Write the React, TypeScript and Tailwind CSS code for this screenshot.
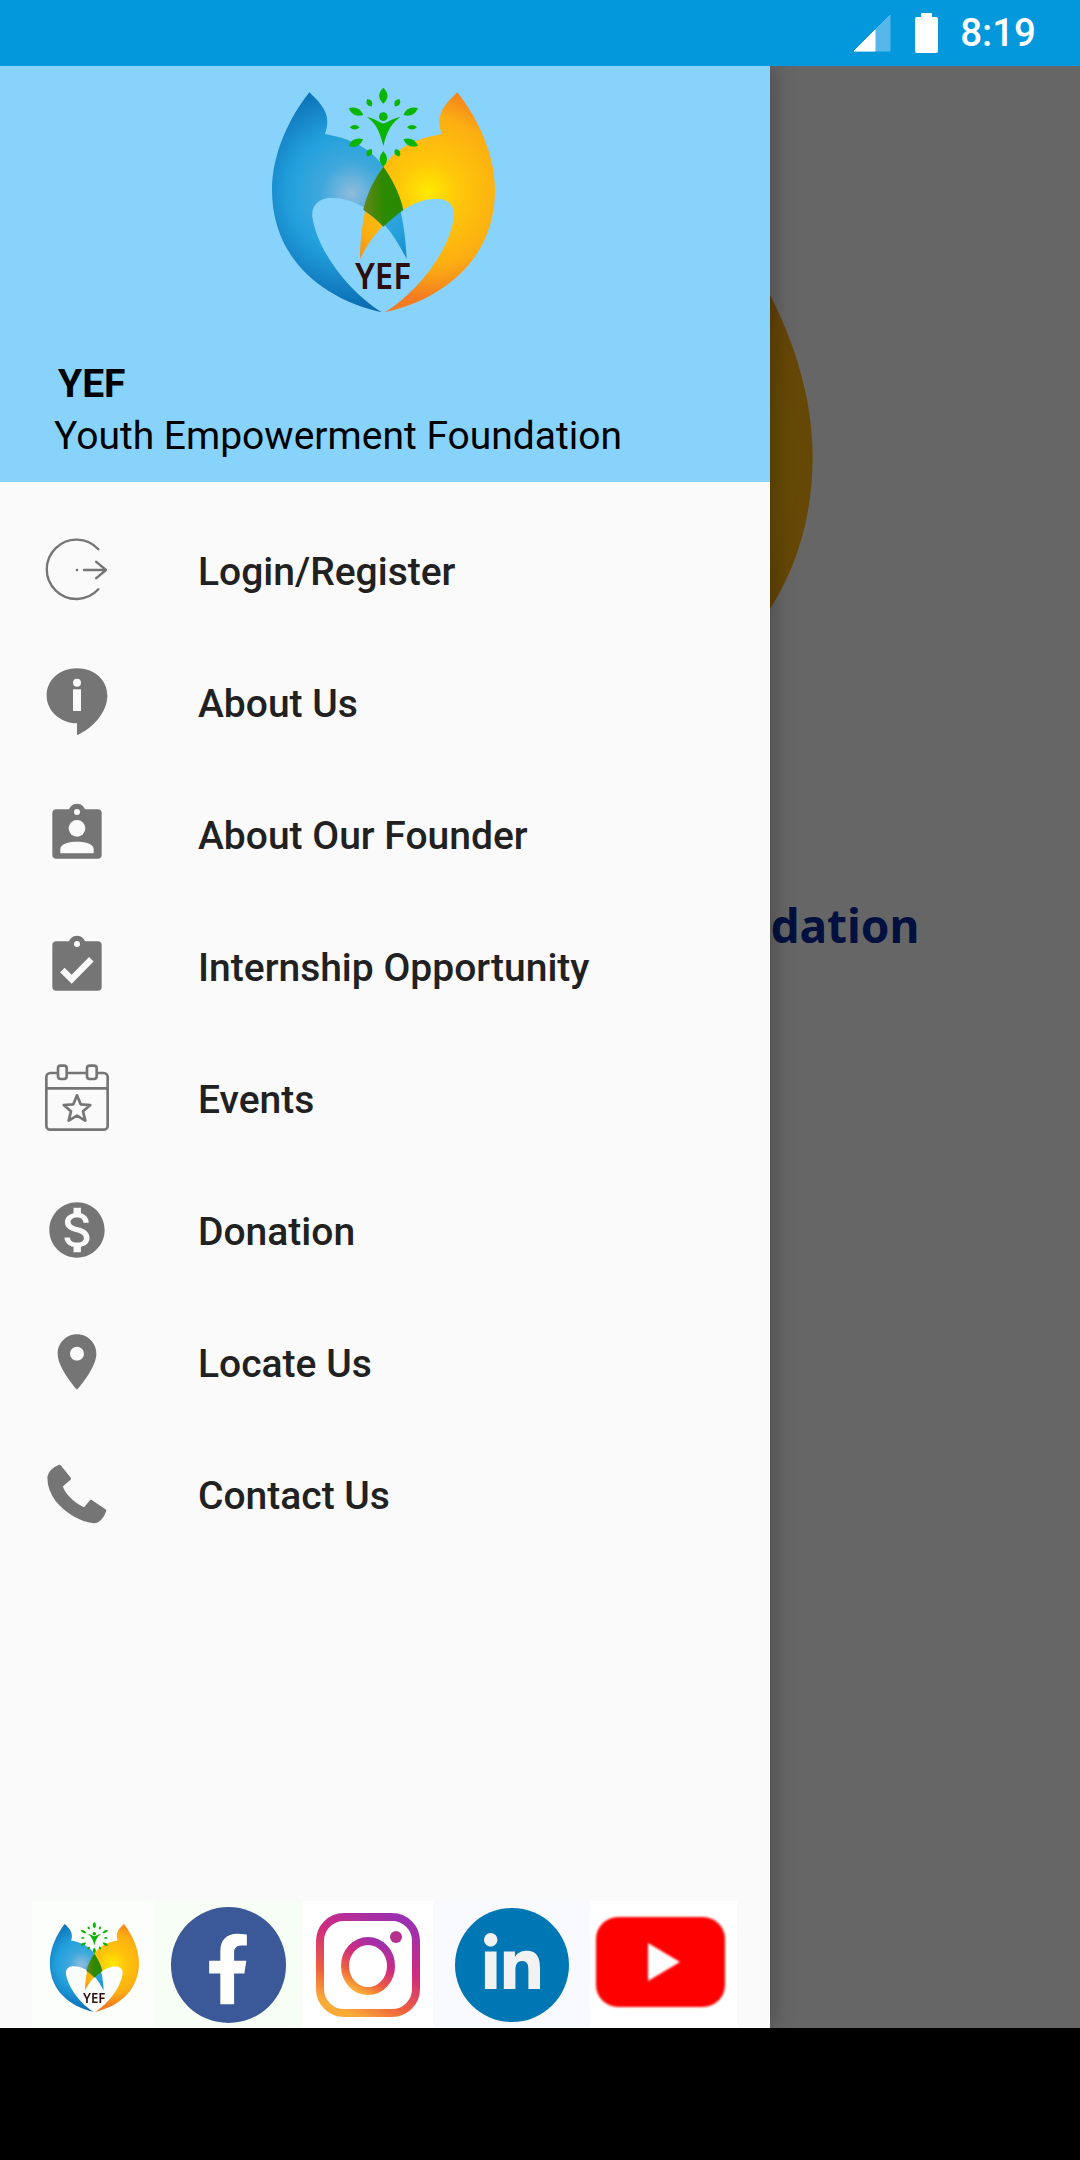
import type { ReactNode } from "react";
import { FaFacebookF, FaLinkedinIn } from "react-icons/fa";

const GREY = "#757575";
const BG = "#fafafa";

const LEAVES = [
  { x: 430, y: 107, r: 0, w: 13, h: 24 },
  { x: 388, y: 128, r: -30, w: 9, h: 13 },
  { x: 472, y: 128, r: 30, w: 9, h: 13 },
  { x: 348, y: 155, r: -65, w: 11, h: 24 },
  { x: 512, y: 155, r: 65, w: 11, h: 24 },
  { x: 344, y: 202, r: 90, w: 7, h: 15 },
  { x: 516, y: 202, r: 90, w: 7, h: 15 },
  { x: 348, y: 248, r: 65, w: 11, h: 24 },
  { x: 512, y: 248, r: -65, w: 11, h: 24 },
  { x: 388, y: 278, r: 30, w: 9, h: 13 },
  { x: 472, y: 278, r: -30, w: 9, h: 13 },
  { x: 430, y: 297, r: 0, w: 12, h: 24 },
];

function Logo({ width, height, id }: { width: number; height: number; id: string }) {
  return (
    <svg width={width} height={height} viewBox="0 0 870 810" className="block shrink-0">
      <defs>
        <radialGradient id={`${id}-blue`} gradientUnits="userSpaceOnUse" cx="335" cy="400" r="390">
          <stop offset="0" stopColor="#8fbcdd" />
          <stop offset="0.24" stopColor="#3ea8dc" />
          <stop offset="0.48" stopColor="#22a0dc" />
          <stop offset="0.7" stopColor="#1583c6" />
          <stop offset="0.88" stopColor="#0a6db2" />
        </radialGradient>
        <radialGradient id={`${id}-orange`} gradientUnits="userSpaceOnUse" cx="565" cy="395" r="390">
          <stop offset="0" stopColor="#ffe900" />
          <stop offset="0.24" stopColor="#ffc60a" />
          <stop offset="0.58" stopColor="#fcae12" />
          <stop offset="0.82" stopColor="#f47b20" />
          <stop offset="1" stopColor="#f47b20" />
        </radialGradient>
        <linearGradient id={`${id}-green`} x1="0" y1="0" x2="1" y2="0">
          <stop offset="0" stopColor="#66851a" />
          <stop offset="0.5" stopColor="#2d8a00" />
          <stop offset="1" stopColor="#268a00" />
        </linearGradient>
      </defs>
      <path
        fill={`url(#${id}-blue)`}
        d="M208 97 C235 122 262 150 262 185 C262 200 258 212 255 222 C330 235 395 265 430 320 C470 380 495 480 500 597 C470 540 440 490 385 450 C340 420 300 412 265 414 C232 418 214 440 217 470 C232 570 320 690 425 757 C240 715 96 590 96 390 C96 280 150 170 208 97 Z"
      />
      <path
        fill={`url(#${id}-orange)`}
        d="M652 97 C625 122 598 150 598 185 C598 200 602 212 605 222 C530 235 465 265 430 320 C385 385 362 480 360 597 C385 545 425 490 480 455 C525 425 560 415 595 416 C628 418 645 440 642 470 C628 570 540 690 435 757 C620 715 765 590 765 390 C765 280 710 170 652 97 Z"
      />
      <path fill={`url(#${id}-green)`} d="M430 320 C455 355 480 400 490 450 C470 465 448 482 430 500 C412 480 392 465 370 450 C380 400 405 355 430 320 Z" />
      {LEAVES.map((l) => (
        <path
          key={`${l.x}-${l.y}`}
          fill="#0ab500"
          transform={`translate(${l.x} ${l.y}) rotate(${l.r})`}
          d={`M0 ${-l.h} Q${l.w * 1.9} 0 0 ${l.h} Q${-l.w * 1.9} 0 0 ${-l.h} Z`}
        />
      ))}
      <circle cx="430" cy="170" r="13" fill="#0ab500" />
      <path fill="#0ab500" d="M381 171 C408 176 420 190 430 190 C440 190 454 176 481 171 C458 188 442 208 430 258 C418 208 404 188 381 171 Z" />
      <text
        x="345"
        y="687"
        textLength="168"
        lengthAdjust="spacingAndGlyphs"
        fill="#2e0d0d"
        fontSize="110"
        fontWeight="600"
        fontFamily="'Noto Sans', sans-serif"
      >
        YEF
      </text>
    </svg>
  );
}

function IconBox({ children }: { children: ReactNode }) {
  return (
    <svg width="96" height="96" viewBox="-144 -144 288 288" className="block shrink-0">
      {children}
    </svg>
  );
}

const CLIP_BODY = "M-62 -74 H62 A12 12 0 0 1 74 -62 V62 A12 12 0 0 1 62 74 H-62 A12 12 0 0 1 -74 62 V-62 A12 12 0 0 1 -62 -74 Z";

const MENU: { label: string; icon: ReactNode }[] = [
  {
    label: "Login/Register",
    icon: (
      <IconBox>
        <g fill="none" stroke={GREY} strokeWidth="7" strokeLinecap="round" strokeLinejoin="round">
          <path d="M64 -62 A89 89 0 1 0 64 58" />
          <path d="M21 0 H86 M57 -25 L87 0 L57 25" />
        </g>
        <circle cx="0" cy="0" r="4" fill={GREY} />
      </IconBox>
    ),
  },
  {
    label: "About Us",
    icon: (
      <IconBox>
        <path fill={GREY} d="M0 -101 C52 -101 91 -66 91 -19 C91 28 50 78 0 99 V64 C-52 62 -91 26 -91 -19 C-91 -66 -52 -101 0 -101 Z" />
        <circle cx="0" cy="-58" r="12" fill={BG} />
        <rect x="-12" y="-38" width="24" height="65" fill={BG} />
      </IconBox>
    ),
  },
  {
    label: "About Our Founder",
    icon: (
      <IconBox>
        <path fill={GREY} d={CLIP_BODY} />
        <circle cx="0" cy="-66" r="25" fill={GREY} />
        <circle cx="0" cy="-66" r="9" fill={BG} />
        <circle cx="0" cy="-17" r="25" fill={BG} />
        <path fill={BG} d="M-50 58 V46 C-50 27 -20 23 0 23 C20 23 50 27 50 46 V58 Z" />
      </IconBox>
    ),
  },
  {
    label: "Internship Opportunity",
    icon: (
      <IconBox>
        <path fill={GREY} d={CLIP_BODY} />
        <circle cx="0" cy="-66" r="25" fill={GREY} />
        <circle cx="0" cy="-66" r="9" fill={BG} />
        <path d="M-44 12 L-16 40 L43 -20" fill="none" stroke={BG} strokeWidth="19" />
      </IconBox>
    ),
  },
  {
    label: "Events",
    icon: (
      <IconBox>
        <g fill="none" stroke={GREY} strokeWidth="8" strokeLinejoin="round">
          <rect x="-92" y="-75" width="184" height="170" rx="12" />
          <path d="M-92 -29 H92" />
          <rect x="-57" y="-97" width="26" height="40" rx="8" fill={BG} />
          <rect x="30" y="-97" width="29" height="40" rx="8" fill={BG} />
          <path strokeWidth="8" d="M0 -8 L11 19 L40 21 L18 40 L25 68 L0 53 L-25 68 L-18 40 L-40 21 L-11 19 Z" />
        </g>
      </IconBox>
    ),
  },
  {
    label: "Donation",
    icon: (
      <IconBox>
        <path
          transform="scale(8.3) translate(-12 -12)"
          fill={GREY}
          d="M12 2C6.48 2 2 6.48 2 12s4.48 10 10 10 10-4.48 10-10S17.52 2 12 2zm1.41 16.09V20h-2.67v-1.93c-1.71-.36-3.16-1.46-3.27-3.4h1.96c.1 1.05.82 1.87 2.65 1.87 1.96 0 2.4-.98 2.4-1.59 0-.83-.44-1.61-2.67-2.14-2.48-.6-4.18-1.62-4.18-3.67 0-1.72 1.39-2.84 3.11-3.21V4h2.67v1.95c1.86.45 2.79 1.86 2.85 3.39H14.3c-.05-1.11-.64-1.87-2.22-1.87-1.5 0-2.4.68-2.4 1.64 0 .84.65 1.39 2.67 1.91s4.18 1.39 4.18 3.91c-.01 1.83-1.38 2.83-3.12 3.16z"
        />
      </IconBox>
    ),
  },
  {
    label: "Locate Us",
    icon: (
      <IconBox>
        <path
          transform="scale(8.3) translate(-12 -12)"
          fill={GREY}
          d="M12 2C8.13 2 5 5.13 5 9c0 5.25 7 13 7 13s7-7.75 7-13c0-3.87-3.13-7-7-7zm0 9.5c-1.38 0-2.5-1.12-2.5-2.5s1.12-2.5 2.5-2.5 2.5 1.12 2.5 2.5-1.12 2.5-2.5 2.5z"
        />
      </IconBox>
    ),
  },
  {
    label: "Contact Us",
    icon: (
      <IconBox>
        <path
          fill={GREY}
          stroke={GREY}
          strokeWidth="8"
          strokeLinejoin="round"
          d="M-52 -84 L-22 -46 L-47 -24 C-42 -5 -20 25 22 45 L42 21 L84 50 C78 68 65 84 50 84 C5 78 -35 50 -60 20 C-75 0 -85 -25 -85 -50 C-82 -65 -68 -78 -52 -84 Z"
        />
      </IconBox>
    ),
  },
];

function FooterLinks() {
  return (
    <div className="flex ml-[32px] h-[127px] overflow-hidden">
      <div className="w-[122px] bg-[#fcfefc] flex items-center justify-center pl-[3px] blur-[0.6px]">
        <Logo width={116} height={108} id="mini" />
      </div>
      <div className="w-[148px] bg-[#f6fef6] flex items-center justify-center">
        <div className="w-[115px] h-[116px] rounded-full bg-[#3b5998] flex items-center justify-center blur-[0.5px]">
          <FaFacebookF className="text-white w-[44px] h-[78px] mt-[8px]" />
        </div>
      </div>
      <div className="w-[131px] bg-white flex items-center justify-center">
        <svg width="106" height="106" viewBox="0 0 106 106" className="blur-[0.6px]">
          <defs>
            <linearGradient id="ig" x1="0.8" y1="0" x2="0.3" y2="1">
              <stop offset="0" stopColor="#9b30b0" />
              <stop offset="0.4" stopColor="#cf2b80" />
              <stop offset="0.75" stopColor="#ee5f3f" />
              <stop offset="1" stopColor="#fbaa35" />
            </linearGradient>
          </defs>
          <rect x="5" y="5" width="96" height="96" rx="24" fill="none" stroke="url(#ig)" strokeWidth="8" />
          <ellipse cx="53" cy="54" rx="23" ry="25" fill="none" stroke="url(#ig)" strokeWidth="8" />
          <circle cx="81" cy="25" r="6" fill="#b5318f" />
        </svg>
      </div>
      <div className="w-[157px] bg-[#f8faff] flex items-center justify-center">
        <div className="w-[114px] h-[114px] rounded-full bg-[#0077b5] flex items-center justify-center blur-[0.5px]">
          <FaLinkedinIn className="text-[#f2f2f2] w-[66px] h-[64px]" />
        </div>
      </div>
      <div className="w-[147px] bg-white flex items-center justify-center pb-[5px] pr-[6px]">
        <div className="w-[129px] h-[90px] rounded-[22px] bg-[#ff0000] flex items-center justify-center blur-[0.8px]">
          <div className="w-0 h-0 border-y-[19px] border-y-transparent border-l-[32px] border-l-white ml-[6px]" />
        </div>
      </div>
    </div>
  );
}

export default function App() {
  return (
    <div className="w-[1080px] h-[2160px] flex flex-col font-['Roboto',sans-serif] overflow-hidden">
      {/* Status bar */}
      <div className="h-[66px] shrink-0 bg-[#0398dc] flex items-center justify-end text-white pr-[44px]">
        <svg width="38" height="38" viewBox="0 0 38 38" className="mr-[24px]">
          <path d="M37 1 V37 H1 Z" fill="#56b7ea" stroke="#56b7ea" strokeWidth="1" strokeLinejoin="round" />
          <path d="M22 16 V37 H1 Z" fill="#ffffff" stroke="#ffffff" strokeWidth="1" strokeLinejoin="round" />
        </svg>
        <div className="flex flex-col items-center mr-[22px]">
          <div className="w-[11px] h-[4px] bg-white rounded-t-[1px]" />
          <div className="w-[23px] h-[36px] bg-white rounded-[2px]" />
        </div>
        <span className="text-[38.5px] leading-none font-medium">8:19</span>
      </div>

      <div className="flex-1 relative bg-white overflow-hidden">
        {/* Page under the drawer */}
        <div className="flex flex-col items-center">
          <div className="mt-[73px] ml-[8px]">
            <Logo width={707} height={659} id="page" />
          </div>
          <h1 className="mt-[104px] text-[46px] leading-[46px] font-bold text-[#002a9e] font-['Noto_Sans',sans-serif] whitespace-nowrap">
            Youth Empowerment Foundation
          </h1>
        </div>
        <div className="absolute inset-0 bg-black/60" />

        {/* Drawer */}
        <div className="absolute left-0 top-0 bottom-0 w-[770px] bg-[#fafafa] flex flex-col shadow-[4px_0_20px_rgba(0,0,0,0.25)]">
          <div className="h-[416px] shrink-0 bg-[#88d3fb] flex flex-col">
            <div className="flex justify-center mt-[-6px] ml-[-1px]">
              <Logo width={290} height={270} id="head" />
            </div>
            <div className="mt-[31px] ml-[58px] text-[39px] leading-[46px] font-bold text-black">YEF</div>
            <div className="mt-[6px] ml-[54px] text-[39px] leading-[46px] text-black whitespace-nowrap">
              Youth Empowerment Foundation
            </div>
          </div>

          <div className="pt-[24px] flex flex-col">
            {MENU.map((item) => (
              <div key={item.label} className="h-[132px] flex items-center pl-[29px]">
                <div className="mt-[-4px]">{item.icon}</div>
                <span className="ml-[73px] text-[39px] font-medium text-[#212121] whitespace-nowrap">{item.label}</span>
              </div>
            ))}
          </div>

          <div className="mt-auto">
            <FooterLinks />
          </div>
        </div>
      </div>

      {/* Nav bar */}
      <div className="h-[132px] shrink-0 bg-black" />
    </div>
  );
}
